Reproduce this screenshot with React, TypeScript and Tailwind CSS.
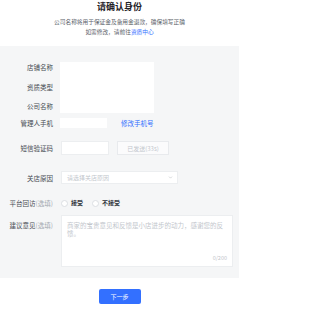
import { ChevronDown } from "lucide-react";

const font = { fontFamily: '"Noto Sans CJK SC", "Noto Sans", sans-serif' };

function Label({ children, optional }: { children: string; optional?: boolean }) {
  return (
    <div className="w-[53px] shrink-0 text-right text-[6.5px] leading-[10px] text-[#474c53] whitespace-nowrap">
      {children}
      {optional && <span className="text-[#a4a9b0]">(选填)</span>}
    </div>
  );
}

export default function App() {
  return (
    <div className="w-[239px] h-[309px] bg-white flex flex-col select-none" style={font}>
      {/* HEADER */}
      <div className="flex flex-col items-center pt-[1px] pb-[9px]">
        <h1 className="text-[9px] leading-[12px] font-bold text-[#1f2329]">请确认身份</h1>
        <p className="mt-[4px] text-[5.7px] leading-[10px] text-[#5d636b] text-center">
          公司名称将用于保证金及备用金退款，确保填写正确
          <br />
          如需修改，请前往<span className="text-[#3370ff]">资质中心</span>
        </p>
      </div>

      {/* FORM */}
      <div className="bg-[#f5f6f7] h-[232px] pt-[16px] flex flex-col">
        <div className="flex gap-[7px]">
          <div className="flex flex-col gap-[9.5px]">
            <Label>店铺名称</Label>
            <Label>资质类型</Label>
            <Label>公司名称</Label>
          </div>
          <div className="w-[94px] h-[51px] bg-white"></div>
        </div>

        <div className="flex items-center gap-[7px] mt-[5px]">
          <Label>管理人手机</Label>
          <div className="w-[47px] h-[10px] bg-white"></div>
          <span className="ml-[7px] text-[6.5px] leading-[10px] text-[#3370ff]">修改手机号</span>
        </div>

        <div className="flex items-center gap-[8px] mt-[13px]">
          <Label>短信验证码</Label>
          <div className="w-[48px] h-[14px] bg-white border border-[#eceef0]"></div>
          <div className="w-[52px] h-[14px] bg-[#fbfbfc] border border-[#e8eaed] flex items-center justify-center text-[6px] text-[#c2c6cc]">
            已发送(33s)
          </div>
        </div>

        <div className="flex items-center gap-[8px] mt-[16px]">
          <Label>关店原因</Label>
          <div className="w-[117px] h-[13px] bg-white border border-[#eceef0] flex items-center justify-between pl-[5px] pr-[4px]">
            <span className="text-[6px] text-[#c2c6cc]">请选择关店原因</span>
            <ChevronDown size={5} strokeWidth={2} className="text-[#a0a4aa]" />
          </div>
        </div>

        <div className="flex items-center gap-[8px] mt-[14px] h-[10px]">
          <Label optional>平台回访</Label>
          <div className="flex items-center gap-[3px]">
            <span className="w-[7px] h-[7px] rounded-full bg-white border border-[#dcdfe3]"></span>
            <span className="text-[6px] leading-[10px] font-semibold text-[#2b2f36]">接受</span>
          </div>
          <div className="ml-[1px] flex items-center gap-[3px]">
            <span className="w-[7px] h-[7px] rounded-full bg-white border border-[#dcdfe3]"></span>
            <span className="text-[6px] leading-[10px] font-semibold text-[#2b2f36]">不接受</span>
          </div>
        </div>

        <div className="flex items-start gap-[8px] mt-[7px]">
          <div className="pt-[5px]">
            <Label optional>建议意见</Label>
          </div>
          <div className="w-[172px] h-[52px] bg-white border border-[#eceef0] flex flex-col justify-between px-[5px] pt-[5px] pb-[4px]">
            <p className="text-[6.5px] leading-[8px] text-[#c2c6cc]">
              商家的宝贵意见和反馈是小店进步的动力，感谢您的反馈。
            </p>
            <span className="self-end text-[5.5px] leading-[8px] text-[#c2c6cc]">0/200</span>
          </div>
        </div>
      </div>

      {/* FOOTER */}
      <div className="flex justify-center pt-[11px]">
        <button className="w-[42px] h-[15px] rounded-[2px] bg-[#3370ff] text-white text-[6px] leading-[15px]">
          下一步
        </button>
      </div>
    </div>
  );
}
